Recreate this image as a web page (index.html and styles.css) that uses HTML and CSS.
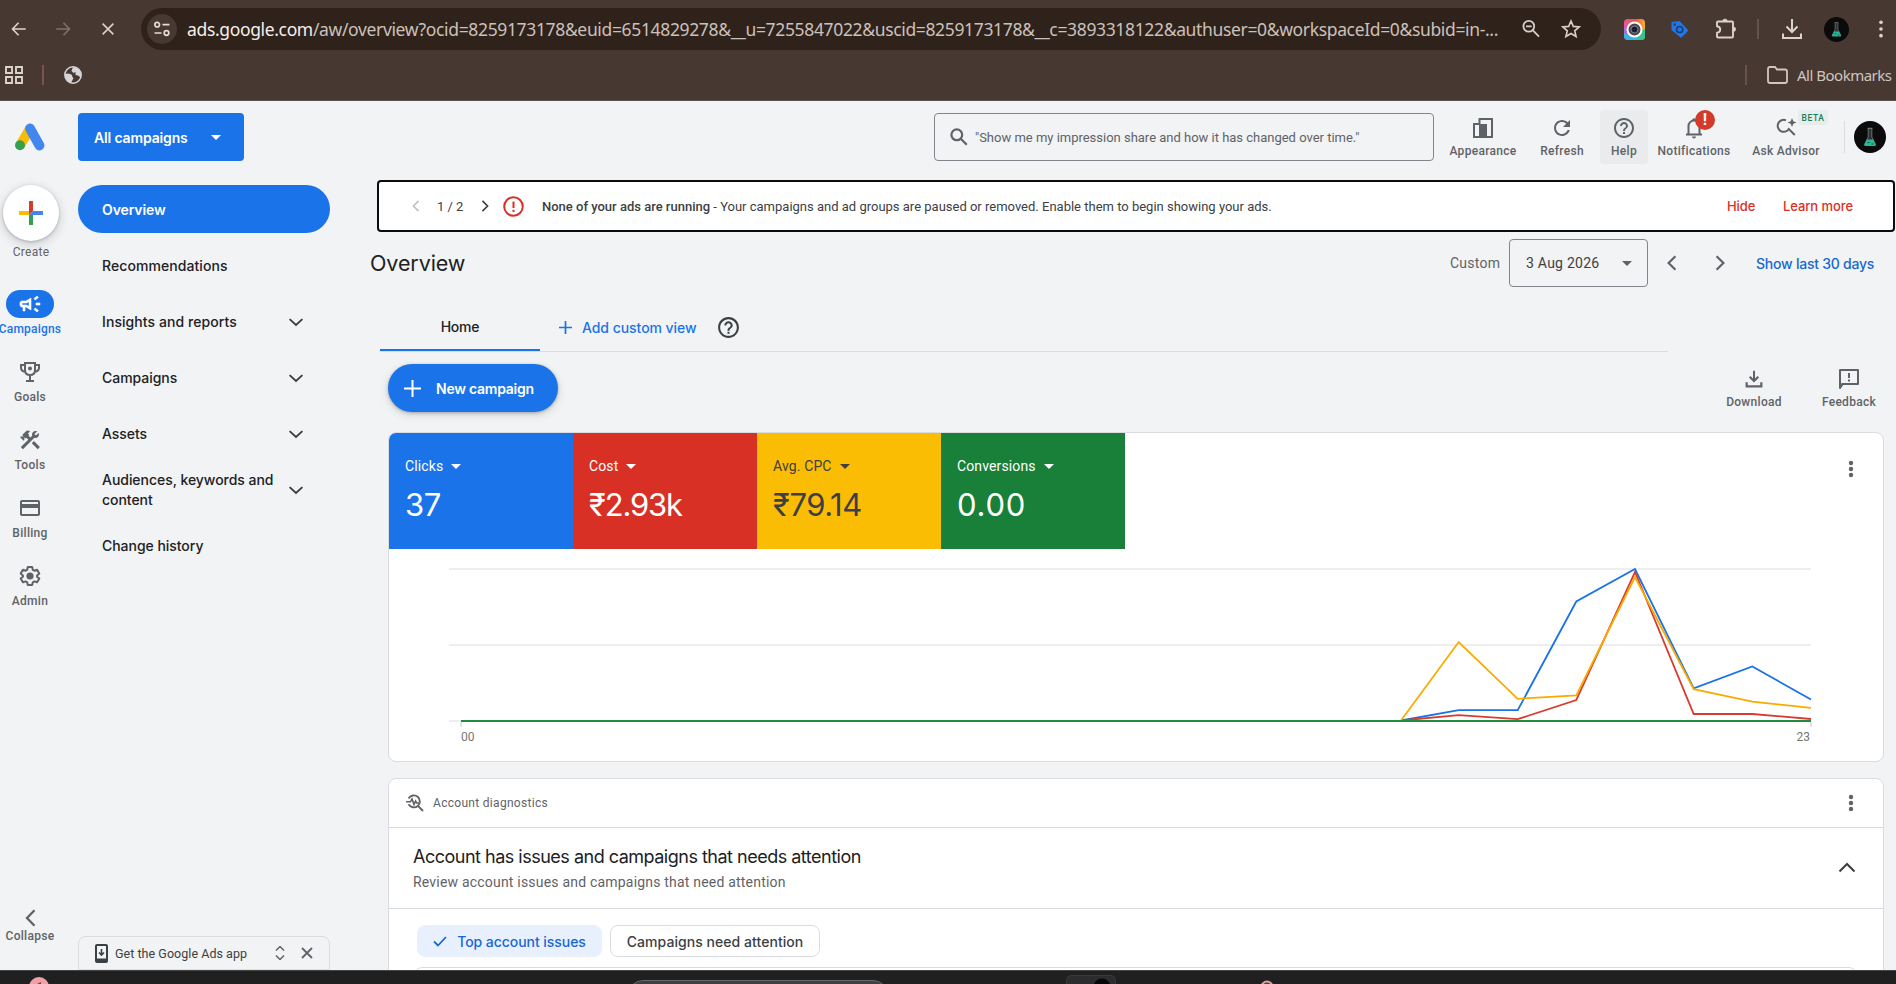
FILE: index.html
```html
<!DOCTYPE html>
<html lang="en">
<head>
<meta charset="utf-8">
<title>Overview - Google Ads</title>
<link rel="stylesheet" href="styles.css">
</head>
<body>
<svg class="defs" width="0" height="0">
  <symbol id="chev-l" viewBox="0 0 24 24"><path d="M15.4 5.2 8.6 12l6.8 6.8" fill="none" stroke="currentColor" stroke-width="2.2"/></symbol>
  <symbol id="chev-r" viewBox="0 0 24 24"><path d="M8.6 5.2 15.4 12l-6.8 6.8" fill="none" stroke="currentColor" stroke-width="2.2"/></symbol>
  <symbol id="chev-d" viewBox="0 0 24 24"><path d="M4.300 8.500 12 15.600l7.700-7.100" fill="none" stroke="currentColor" stroke-width="2.3"/></symbol>
  <symbol id="chev-u" viewBox="0 0 24 24"><path d="M4.5 15.5 12 8l7.5 7.500" fill="none" stroke="currentColor" stroke-width="2"/></symbol>
  <symbol id="help" viewBox="0 0 24 24"><path fill="currentColor" d="M11 18h2v-2h-2v2zm1-16C6.480 2 2 6.480 2 12s4.480 10 10 10 10-4.480 10-10S17.520 2 12 2zm0 18c-4.410 0-8-3.590-8-8s3.590-8 8-8 8 3.590 8 8-3.590 8-8 8zm0-14c-2.210 0-4 1.790-4 4h2c0-1.100.9-2 2-2s2 .9 2 2c0 2-3 1.750-3 5h2c0-2.250 3-2.500 3-5 0-2.210-1.790-4-4-4z"/></symbol>
  <symbol id="dots" viewBox="0 0 24 24"><circle cx="12" cy="6" r="2.200"/><circle cx="12" cy="12" r="2.200"/><circle cx="12" cy="18" r="2.200"/></symbol>
  <symbol id="download" viewBox="0 0 24 24"><path d="M12 3v11" fill="none" stroke="currentColor" stroke-width="2.200"/><path d="M7.300 9.500 12 14.200l4.700-4.700M4 15.500V20h16v-4.500" fill="none" stroke="currentColor" stroke-width="2.400"/></symbol>
  <symbol id="caret" viewBox="0 0 10 5"><path d="M0 0h10L5 5z" fill="currentColor"/></symbol>
  <symbol id="flask" viewBox="0 0 32 32"><circle cx="16" cy="16" r="16" fill="#0b0b0c"/><path d="M13.500 7.500h5" stroke="#777" stroke-width="1.500"/><path d="M14.200 8v8l-3.700 7.500h11L17.800 16V8" fill="#2b3134" stroke="#777" stroke-width=".9"/><path d="M12.800 18.500h6.400l2.600 5.500q0 1-1 1h-9.600q-1 0-1-1z" fill="#27b796"/><path d="M13.500 21.500h2m2 1.500h2" stroke="#0c5546" stroke-width="1.200"/></symbol>
</svg>

<header class="chrome">
  <div class="toolbar">
    <svg class="nav-i" viewBox="0 0 20 20"><path d="M17.500 10H3M9.500 3 2.800 10l6.700 7" fill="none" stroke="#dcd3cd" stroke-width="1.800"/></svg>
    <svg class="nav-i" viewBox="0 0 20 20"><path d="M2.500 10H17M10.500 3l6.700 7-6.700 7" fill="none" stroke="#7f706a" stroke-width="1.800"/></svg>
    <svg class="nav-i stop" viewBox="0 0 20 20"><path d="m4 4 12 12M16 4 4 16" fill="none" stroke="#dcd3cd" stroke-width="1.700"/></svg>
    <div class="omnibox">
      <span class="tune"><svg width="18" height="18" viewBox="0 0 18 18" fill="none" stroke="#e6deda" stroke-width="1.700"><circle cx="4.200" cy="4.700" r="2.300"/><path d="M9.500 4.700h7M1.500 13h7"/><circle cx="13.500" cy="13" r="2.300"/></svg></span>
      <span class="url"><b>ads.google.com</b>/aw/overview?ocid=8259173178&amp;euid=6514829278&amp;__u=7255847022&amp;uscid=8259173178&amp;__c=3893318122&amp;authuser=0&amp;workspaceId=0&amp;subid=in-...</span>
      <svg class="zoom-i" width="20" height="20" viewBox="0 0 20 20" fill="none" stroke="#d8cfc9" stroke-width="1.800"><circle cx="7.800" cy="7.300" r="5.400"/><path d="M5 7.300h5.600M11.700 11.200l6.300 6.500"/></svg>
      <svg width="20" height="20" viewBox="0 0 20 20" fill="none" stroke="#d8cfc9" stroke-width="1.600"><path d="m10 2 2.300 5.400 5.900.5-4.500 3.900 1.400 5.700-5.100-3-5.100 3 1.400-5.700L1.800 7.900l5.900-.5z"/></svg>
    </div>
    <svg class="cam" width="21" height="21" viewBox="0 0 21 21"><defs><linearGradient id="cg" x1="0" y1="0" x2="1" y2="0"><stop offset="0" stop-color="#e85a98"/><stop offset=".55" stop-color="#ef5148"/><stop offset="1" stop-color="#f6b12b"/></linearGradient></defs><rect width="21" height="21" rx="4" fill="url(#cg)"/><path d="M0 10.500h21V17q0 4-4 4H4q-4 0-4-4z" fill="#38b5e8"/><path d="M13 10.500h8V17q0 4-4 4h-4z" fill="#37c48c"/><path d="M0 8h8v10L0 14z" fill="#a96be0"/><circle cx="10.500" cy="10.500" r="7" fill="#4c474e" stroke="#fff" stroke-width="2"/><circle cx="10.500" cy="10.500" r="3.500" fill="#1b1b33" stroke="#84838c"/></svg>
    <svg class="tag" width="19" height="19" viewBox="0 0 19 19"><path d="M1.500 2 9.500 1l8 8.500q1 1 0 2L12 17q-1 1-2 0L1.500 10z" fill="#2376e5"/><circle cx="4.700" cy="4.500" r="1.300" fill="#473831"/><circle cx="9.700" cy="9.500" r="3.100" fill="none" stroke="#173a74" stroke-width="1.500"/></svg>
    <svg class="puz" width="22" height="22" viewBox="0 0 22 22" fill="none" stroke="#dcd3cd" stroke-width="1.900" stroke-linejoin="round"><path d="M2 4.500q0-1 1-1h14q1 0 1 1v14q0 1-1 1H3q-1 0-1-1v-3.700q3.200-.3 3.200-3.300T2 8.200z"/><path d="M7.800 3q0-2 2.200-2t2.200 2zM18.500 9q2.200 0 2.200 2.200t-2.200 2.200z" fill="#dcd3cd" stroke-width=".6"/></svg>
    <span class="vbar"></span>
    <svg class="dl" width="22" height="22" viewBox="0 0 22 22" fill="none" stroke="#dcd3cd" stroke-width="2"><path d="M11 1v12.500M5.500 8.500 11 14l5.500-5.500M2 15.500V20h18v-4.500"/></svg>
    <svg class="pf" width="25" height="25"><use href="#flask"/></svg>
    <svg class="kebab" width="24" height="20" viewBox="0 0 24 24" fill="#dcd3cd"><circle cx="12" cy="4" r="2.200"/><circle cx="12" cy="12" r="2.200"/><circle cx="12" cy="20" r="2.200"/></svg>
  </div>
  <div class="bookmarks">
    <svg width="18" height="18" viewBox="0 0 18 18" fill="none" stroke="#dcd3cd" stroke-width="1.900"><path d="M1 1h6v6H1zM11 1h6v6h-6zM1 11h6v6H1zM11 11h6v6h-6z"/></svg>
    <span class="vbar b1"></span>
    <svg class="globe" width="18" height="18" viewBox="0 0 18 18"><circle cx="9" cy="9" r="8.200" fill="#473831" stroke="#d5d6d9" stroke-width="1.500"/><path d="M1 8q4-1.500 7 1 0 2.500 1.500 3L7 17Q1 15 1 8zM9 1l-1.500 4 2 2 2-1v3l2.500.5q2 1 2.500 2.500Q19 3 9 1z" fill="#d5d6d9"/></svg>
    <span class="grow"></span>
    <span class="vbar"></span>
    <svg class="folder" width="21" height="18" viewBox="0 0 21 18" fill="none" stroke="#d0c7c1" stroke-width="1.800"><path d="M1 3q0-2 2-2h5l2 2.500h8q2 0 2 2V15q0 2-2 2H3q-2 0-2-2z"/></svg>
    <span class="allbm">All Bookmarks</span>
  </div>
</header>

<div class="app">
  <div class="appbar">
    <svg class="logo" width="32" height="28" viewBox="0 0 32 28"><path d="M16 5.500 6 22.500" stroke="#fbbc04" stroke-width="9.600" /><path d="M16 5.500 25.500 22.500" stroke="#4286ee" stroke-width="9.800" stroke-linecap="round"/><circle cx="6" cy="22.300" r="5" fill="#34a04f"/></svg>
    <button class="picker"><span>All campaigns</span><svg width="10" height="5"><use href="#caret"/></svg></button>
    <div class="search"><svg width="18" height="18" viewBox="0 0 18 18" fill="none" stroke="#5f6368" stroke-width="2.200"><circle cx="6.800" cy="6.800" r="5.400"/><path d="m10.800 10.800 6 6"/></svg><span>"Show me my impression share and how it has changed over time."</span></div>
    <div class="tool t-app"><svg width="24" height="24" viewBox="0 0 24 24" fill="none" stroke="#5f6368" stroke-width="2"><path d="M8.500 7V3H21v18H3V8h5.500z"/><path d="M9 9h6v12H9z" fill="#5f6368"/></svg><span>Appearance</span></div>
    <div class="tool t-ref"><svg width="24" height="24" viewBox="0 0 24 24" fill="#5f6368"><path d="M17.650 6.350C16.200 4.900 14.210 4 12 4c-4.420 0-7.990 3.580-7.990 8s3.570 8 7.990 8c3.730 0 6.840-2.550 7.730-6h-2.080c-.820 2.330-3.040 4-5.650 4-3.310 0-6-2.690-6-6s2.690-6 6-6c1.660 0 3.140.690 4.220 1.780L13 11h7V4l-2.350 2.350z"/></svg><span>Refresh</span></div>
    <div class="tool t-help"><svg width="24" height="24"><use href="#help"/></svg><span>Help</span></div>
    <div class="tool t-not"><svg width="24" height="24" viewBox="0 0 24 24"><path d="M4 18.500h16M6.500 18v-8a5.500 5.500 0 0 1 11 0v8" fill="none" stroke="#5f6368" stroke-width="2"/><path d="M10 20.500h4q0 2-2 2t-2-2zM10.500 5V3q1.500-1.500 3 0v2z" fill="#5f6368"/></svg><span>Notifications</span><i class="alert-dot">!</i></div>
    <div class="tool t-ask"><svg width="24" height="24" viewBox="0 0 24 24"><path d="M12 4.300A6 6 0 1 0 14.800 13l6 6" fill="none" stroke="#5f6368" stroke-width="2"/><path d="m18 2 1.300 3.200L22.500 6.500l-3.200 1.300L18 11l-1.300-3.200-3.200-1.300 3.200-1.300z" fill="#5f6368"/></svg><span>Ask Advisor</span><i class="beta">BETA</i></div>
    <span class="sep"></span>
    <svg class="avatar" width="32" height="32"><use href="#flask"/></svg>
  </div>

  <div class="body">
    <aside class="rail">
      <div class="create"><svg width="24" height="24" viewBox="0 0 24 24"><path d="M10 0h4v10l-4 4z" fill="#d33b2c"/><path d="M0 10h10v4H0z" fill="#fbbc04"/><path d="M10 14h4v10h-4z" fill="#34a04f"/><path d="M24 10v4H10l4-4z" fill="#4286ee"/></svg></div>
      <span class="lbl create-l">Create</span>
      <div class="pill"><svg width="24" height="24" viewBox="0 0 24 24" fill="#fff"><path d="M18 11v2h4v-2h-4zM16 17.610c.960.710 2.210 1.650 3.200 2.390.4-.530.8-1.070 1.200-1.600-.990-.740-2.240-1.680-3.200-2.400-.4.540-.8 1.080-1.200 1.610zM20.400 5.600c-.4-.530-.8-1.070-1.200-1.600-.990.740-2.240 1.680-3.200 2.400.4.530.8 1.070 1.200 1.600.960-.720 2.210-1.650 3.200-2.400zM4 9c-1.100 0-2 .9-2 2v2c0 1.100.9 2 2 2h1v4h2v-4h1l5 3V6L8 9H4zm5.030 1.710L11 9.530v4.940l-1.970-1.180-.48-.29H4v-2h4.550l.48-.29z" stroke="#fff" stroke-width=".6"/></svg></div>
      <span class="lbl on">Campaigns</span>
      <svg class="ri" viewBox="0 0 24 24"><path d="M7 3h10v7q0 5-5 5t-5-5zM7 5H3v3q0 3 4.500 4M17 5h4v3q0 3-4.500 4M12 15v6M8 21h8" fill="none" stroke="#5f6368" stroke-width="2"/><circle cx="12" cy="8.500" r="2" fill="#5f6368"/></svg>
      <span class="lbl">Goals</span>
      <svg class="ri" viewBox="0 0 24 24" fill="#5f6368"><path d="m13.783 15.172 2.121-2.121 5.996 5.996-2.121 2.121zM17.500 10c1.930 0 3.500-1.570 3.500-3.500 0-.580-.160-1.120-.410-1.600l-2.700 2.700-1.490-1.490 2.700-2.700c-.480-.250-1.020-.410-1.600-.410C15.570 3 14 4.570 14 6.500c0 .410.080.8.210 1.160l-1.850 1.850-1.780-1.780.710-.710-1.410-1.410L12 3.490c-1.170-1.170-3.070-1.170-4.240 0L4.220 7.030l1.410 1.410H2.810l-.710.710 3.540 3.540.710-.710V9.150l1.410 1.410.710-.710 1.780 1.780-7.410 7.410 2.120 2.120L16.340 9.790c.360.130.750.210 1.160.210z"/></svg>
      <span class="lbl">Tools</span>
      <svg class="ri" viewBox="0 0 24 24" fill="#5f6368"><path d="M20 4H4c-1.110 0-1.990.890-1.990 2L2 18c0 1.110.890 2 2 2h16c1.110 0 2-.890 2-2V6c0-1.110-.890-2-2-2zm0 14H4v-6h16v6zm0-10H4V6h16v2z"/></svg>
      <span class="lbl">Billing</span>
      <svg class="ri" viewBox="0 0 24 24"><path d="M9.800 3h4.400l.6 2.800 1.500.9 2.800-.9 2.200 3.700-2.200 1.900v1.300l2.200 1.900-2.200 3.700-2.800-.9-1.500.9-.6 2.700H9.800l-.6-2.700-1.500-.9-2.800.9-2.200-3.700 2.200-1.900v-1.300L2.700 9.500l2.200-3.700 2.800.9 1.500-.9z" fill="none" stroke="#5f6368" stroke-width="2" stroke-linejoin="round"/><circle cx="12" cy="12" r="3.600" fill="#5f6368"/></svg>
      <span class="lbl">Admin</span>
      <span class="grow"></span>
      <svg class="ri col" viewBox="0 0 24 24"><path d="M16.500 4.300 9 12l7.500 7.700" fill="none" stroke="#5f6368" stroke-width="2.300"/></svg>
      <span class="lbl col-l">Collapse</span>
    </aside>

    <nav class="menu">
      <a class="mi cur"><span>Overview</span></a>
      <a class="mi"><span class="w-rec">Recommendations</span></a>
      <a class="mi"><span class="w-rec">Insights and reports</span><svg width="20" height="20"><use href="#chev-d"/></svg></a>
      <a class="mi"><span>Campaigns</span><svg width="20" height="20"><use href="#chev-d"/></svg></a>
      <a class="mi"><span>Assets</span><svg width="20" height="20"><use href="#chev-d"/></svg></a>
      <a class="mi"><span>Audiences, keywords and<br>content</span><svg width="20" height="20"><use href="#chev-d"/></svg></a>
      <a class="mi"><span>Change history</span></a>
      <span class="grow"></span>
      <div class="promo">
        <svg width="13" height="19" viewBox="0 0 13 19"><rect x="1" y="1" width="11" height="17" rx="1" fill="none" stroke="#3c4043" stroke-width="2"/><path d="M1 14.500h11V18H1z" fill="#3c4043"/><path d="M6.500 5v6M4 8.500l2.500 2.500L9 8.500" stroke="#3c4043" stroke-width="1.600" fill="none"/></svg>
        <span>Get the Google Ads app</span>
        <svg class="ud" width="10" height="14" viewBox="0 0 10 14" fill="none" stroke="#5f6368" stroke-width="1.500"><path d="m1 4.500 4-4 4 4M1 9.500l4 4 4-4"/></svg>
        <svg width="12" height="12" viewBox="0 0 12 12" stroke="#5f6368" stroke-width="1.800"><path d="m1 1 10 10M11 1 1 11"/></svg>
      </div>
    </nav>

    <main class="main">
      <div class="banner">
        <svg class="pv" width="18" height="18"><use href="#chev-l"/></svg>
        <span class="pg">1 / 2</span>
        <svg class="nx" width="18" height="18"><use href="#chev-r"/></svg>
        <svg class="err" width="21" height="21" viewBox="0 0 21 21"><circle cx="10.500" cy="10.500" r="9.300" fill="none" stroke="#d93025" stroke-width="2"/><path d="M10.500 5.500v6.500M10.500 13.700v2.200" stroke="#d93025" stroke-width="2"/></svg>
        <span class="msg"><b>None of your ads are running</b> - Your campaigns and ad groups are paused or removed. Enable them to begin showing your ads.</span>
        <a class="hide">Hide</a><a class="learn">Learn more</a>
      </div>

      <div class="titlebar">
        <h1>Overview</h1>
        <span class="custom">Custom</span>
        <div class="date"><span>3 Aug 2026</span><svg width="10" height="5"><use href="#caret"/></svg></div>
        <svg class="p1" width="24" height="24"><use href="#chev-l"/></svg>
        <svg class="p2" width="24" height="24"><use href="#chev-r"/></svg>
        <a class="last30">Show last 30 days</a>
      </div>

      <div class="tabs">
        <span class="tab">Home</span>
        <a class="add"><svg width="13" height="13" viewBox="0 0 13 13" stroke="#1a73e8" stroke-width="1.700"><path d="M6.500 0v13M0 6.500h13"/></svg><span>Add custom view</span></a>
        <svg class="thelp" width="25" height="25"><use href="#help"/></svg>
      </div>

      <div class="actions">
        <button class="newc"><svg width="17" height="17" viewBox="0 0 17 17" stroke="#fff" stroke-width="2"><path d="M8.500 0v17M0 8.500h17"/></svg><span>New campaign</span></button>
        <div class="act a1"><svg width="22" height="22"><use href="#download"/></svg><span>Download</span></div>
        <div class="act a2"><svg width="24" height="24" viewBox="0 0 24 24"><path d="M3 21V3h18v14H5.500z" fill="none" stroke="#5f6368" stroke-width="2" stroke-linejoin="round"/><path d="M3 16v5l4-4zM11 6h2v5h-2zM11 12.500h2v2h-2z" fill="#5f6368"/></svg><span>Feedback</span></div>
      </div>

      <section class="card chart">
        <div class="tiles">
          <div class="tile blue"><span class="k">Clicks<svg width="10" height="5"><use href="#caret"/></svg></span><span class="v">37</span></div>
          <div class="tile red"><span class="k">Cost<svg width="10" height="5"><use href="#caret"/></svg></span><span class="v money">₹2.93k</span></div>
          <div class="tile yellow"><span class="k">Avg. CPC<svg width="10" height="5"><use href="#caret"/></svg></span><span class="v">₹79.14</span></div>
          <div class="tile green"><span class="k">Conversions<svg width="10" height="5"><use href="#caret"/></svg></span><span class="v wide">0.00</span></div>
          <svg class="more" width="24" height="24" fill="#5f6368"><use href="#dots"/></svg>
        </div>
        <svg class="plot" width="1493" height="180" viewBox="389 549 1493 180" fill="none" stroke-width="2">
          <path d="M449 569h1362M449 645h1362M449 721h1362" stroke="#eeeeee"/>
          <path d="M461 722v5M1811 722v5" stroke="#e4e4e4"/>
          <path d="M1401 720.500 1458.700 710.200H1517.700L1576.300 601.500 1635 569 1693.700 688.300 1752.300 666.500 1811 699.500" stroke="#1a73e8" stroke-width="1.800"/>
          <path d="M1401 720.500 1458.700 715.200 1517.700 719.200 1576.300 700 1635 572 1693.700 714H1752.300L1811 719" stroke="#d93b2f" stroke-width="1.800"/>
          <path d="M1401 720.500 1458.700 642 1517.700 698.800 1576.300 695.500 1635 577 1693.700 689.200 1752.300 701.700 1811 707.800" stroke="#f9ab00" stroke-width="1.800"/>
          <path d="M461 721H1811" stroke="#1e8e3e"/>
        </svg>
        <div class="axis"><span>00</span><span>23</span></div>
      </section>

      <section class="card diag">
        <div class="dh">
          <svg width="18" height="18" viewBox="0 0 18 18" fill="none" stroke="#5f6368" stroke-width="1.900"><path d="M2.600 4.500a6 6 0 1 1 0 5.800M11.700 11.700l5.300 5.300"/><path d="M0 7.800h4.500L6 5l2 5.500L9.500 7l1.200 2h2.300" stroke-width="1.600"/></svg>
          <span>Account diagnostics</span>
          <svg class="more2" width="24" height="24" fill="#5f6368"><use href="#dots"/></svg>
        </div>
        <div class="di">
          <div><h2>Account has issues and campaigns that needs attention</h2><p>Review account issues and campaigns that need attention</p></div>
          <svg width="24" height="24"><use href="#chev-u"/></svg>
        </div>
        <div class="chips">
          <span class="chip sel"><svg width="14" height="11" viewBox="0 0 14 11" fill="none" stroke="#1967d2" stroke-width="1.800"><path d="m1 5.500 4 4 8-8.500"/></svg><em>Top account issues</em></span>
          <span class="chip">Campaigns need attention</span>
        </div>
        <div class="inner"></div>
      </section>
    </main>
  </div>
</div>

<footer class="taskbar">
  <svg width="1896" height="13" viewBox="0 971 1896 13"><circle cx="39" cy="987" r="10" fill="#f0a0a6"/><path d="m37 984 4-2v2z" fill="#7a3d42"/><rect x="628" y="980.500" width="260" height="30" rx="15" fill="#3e3f41" stroke="#67686a"/><rect x="1066.500" y="975.500" width="49" height="30" rx="5" fill="#2c2c2e" stroke="#3a3a3c"/><circle cx="1102" cy="987" r="8.500" fill="#060606"/><circle cx="1267" cy="987" r="5.500" fill="#5a3b3b" stroke="#d9a3a0" stroke-width="2"/></svg>
</footer>
</body>
</html>
```
FILE: styles.css
```css
* { box-sizing: border-box; }
body { margin: 0; width: 1896px; height: 984px; overflow: hidden; background: #f1f3f4; color: #202124; font-family: Roboto, "Liberation Sans", sans-serif; display: flex; flex-direction: column; }
svg { display: block; flex: none; }
.defs { position: absolute; }
button { border: 0; padding: 0; font: inherit; color: inherit; }
.grow { flex: 1; }
span, a { white-space: nowrap; }

/* Browser frame */
.chrome { height: 101px; flex: none; background: #473831; border-bottom: 1px solid #55504e; }
.toolbar { height: 58px; display: flex; align-items: center; }
.nav-i { width: 18px; height: 18px; margin-left: 10px; margin-right: 16px; }
.nav-i.stop { margin-left: 10px; margin-right: 24px; }
.toolbar .nav-i:nth-child(2) { margin-left: 10px; margin-right: 17px; }
.omnibox { width: 1460px; height: 42px; border-radius: 21px; background: #2f221b; display: flex; align-items: center; padding-left: 6px; }
.tune { width: 30px; height: 30px; border-radius: 50%; background: #473831; display: grid; place-items: center; }
.url { font-family: "Noto Sans", sans-serif; font-size: 17.500px; color: #cbc0ba; margin-left: 10px; width: 1327px; letter-spacing: -0.350px; }
.url b { font-weight: 400; color: #f5eeea; }
.zoom-i { margin-left: 7px; margin-right: 20px; }
.cam { margin-left: 23px; }
.tag { margin-left: 25px; }
.puz { margin-left: 26px; }
.vbar { width: 2px; height: 20px; background: #66514b; }
.toolbar .vbar { margin-left: 20px; }
.dl { margin-left: 22px; }
.pf { margin-left: 21px; }
.kebab { margin-left: 20px; }
.bookmarks { height: 34px; display: flex; align-items: center; padding-left: 5px; }
.b1 { margin-left: 19px; background: #7a534d; }
.globe { margin-left: 20px; }
.folder { margin-left: 20px; }
.allbm { margin-left: 9px; width: 99px; font: 15px "Noto Sans", sans-serif; color: #cfc6c0; letter-spacing: -.5px; }

/* App bar */
.app { height: 869px; flex: none; overflow: hidden; display: flex; flex-direction: column; }
.appbar { height: 72px; flex: none; display: flex; align-items: center; padding-left: 14px; }
.picker { margin-left: 32px; width: 166px; height: 48px; border-radius: 4px; background: #1a73e8; color: #fff; display: flex; align-items: center; padding: 0 23px 0 16px; justify-content: space-between; font: 600 14px Inter, sans-serif; letter-spacing: -.15px; }
.search { margin-left: 690px; width: 500px; height: 48px; border: 1px solid #80868b; border-radius: 4px; display: flex; align-items: center; padding-left: 15px; gap: 7px; font-size: 13px; color: #5f6368; letter-spacing: -.01px; }
.tool { position: relative; height: 54px; display: flex; flex-direction: column; align-items: center; padding-top: 6px; color: #5f6368; font-size: 12px; font-weight: 500; letter-spacing: .3px; border-radius: 4px; line-height: 14px; gap: 4px; }
.t-app { width: 78px; margin-left: 10px; }
.t-ref { width: 52px; margin-left: 14px; }
.t-help { width: 48px; margin-left: 12px; background: #e9ebec; }
.t-not { width: 80px; margin-left: 6px; }
.t-ask { width: 80px; margin-left: 12px; }
.alert-dot { position: absolute; left: 41px; top: 0; width: 20px; height: 20px; border-radius: 50%; background: #d23a2c; color: #fff; font: 700 16px/20px Roboto, sans-serif; text-align: center; }
.beta { position: absolute; left: 52px; top: 0; width: 30px; height: 15px; background: #e7edec; border-radius: 3px; color: #188056; font: 500 8.500px/16px Roboto, sans-serif; text-align: center; letter-spacing: .6px; }
.sep { width: 1px; height: 32px; background: #dadce0; margin-left: 18px; }
.avatar { margin-left: 9px; }

.body { flex: 1; display: flex; min-height: 0; }

/* Icon rail */
.rail { width: 60px; flex: none; display: flex; flex-direction: column; align-items: center; padding-top: 12px; padding-bottom: 26px; }
.create { width: 56px; height: 56px; flex: none; border-radius: 50%; background: #fff; box-shadow: 0 1px 3px rgba(60,64,67,.3), 0 3px 8px 2px rgba(60,64,67,.15); display: grid; place-items: center; margin-left: 2px; }
.lbl { font-size: 12px; font-weight: 500; line-height: 16px; letter-spacing: .3px; color: #5f6368; }
.create-l { margin-top: 3px; font-weight: 400; margin-left: 2px; }
.pill { width: 48px; height: 28px; border-radius: 14px; background: #1a73e8; display: grid; place-items: center; margin-top: 30px; margin-bottom: 3px; }
.on { color: #1a73e8; letter-spacing: .2px; }
.ri { width: 24px; height: 24px; margin-top: 23px; margin-bottom: 5px; }
.ri.col { margin-bottom: -2px; }

/* Section menu */
.menu { width: 252px; margin-left: 18px; flex: none; display: flex; flex-direction: column; padding-top: 12px; font: 500 14px/20px Inter, sans-serif; }
.mi { height: 56px; flex: none; display: flex; align-items: center; justify-content: space-between; padding: 1px 24px 0; letter-spacing: -.04px; }
.w-rec { letter-spacing: .07px; }
.mi svg { color: #3c4043; }
.cur { height: 48px; border-radius: 24px; background: #1a73e8; color: #fff; margin-bottom: 4px; font-weight: 600; letter-spacing: -.1px; }
.promo { height: 34px; border: 1px solid #dadce0; border-radius: 8px 8px 0 0; display: flex; align-items: center; padding: 0 0 0 16px; font: 12.500px Roboto, sans-serif; color: #3c4043; letter-spacing: .04px; }
.promo span { width: 142px; margin-left: 7px; }
.promo .ud { margin-left: 18px; margin-right: 16px; }

/* Main column */
.main { width: 1526px; margin-left: 40px; flex: none; }
.banner { margin-left: 7px; margin-top: 7px; width: 1518px; height: 52px; border: 2px solid #0b0b0b; border-radius: 4px; background: #fff; display: flex; align-items: center; font-size: 13px; color: #3c4043; }
.banner b { font-weight: 500; }
.pv { color: #bdc1c6; margin-left: 28px; }
.pg { width: 27px; margin-left: 12px; }
.nx { margin-left: 12px; }
.err { margin-left: 9px; }
.msg { margin-left: 18px; width: 1185px; letter-spacing: 0; }
.banner a { color: #d93025; font: 500 13px Inter, sans-serif; letter-spacing: -.08px; }
.hide { width: 56px; }

.titlebar { height: 62px; display: flex; align-items: center; }
h1 { margin: 0; width: 1080px; font: 400 21.500px Inter, sans-serif; letter-spacing: -.1px; }
.custom { width: 59px; font-size: 14px; color: #5f6368; letter-spacing: .25px; }
.date { width: 139px; height: 48px; border: 1px solid #80868b; border-radius: 4px; display: flex; align-items: center; justify-content: space-between; padding: 0 15px 0 16px; font-size: 14px; color: #3c4043; letter-spacing: .25px; }
.date svg, .p1, .p2 { color: #5f6368; }
.p1 { margin-left: 12px; }
.p2 { margin-left: 24px; }
.last30 { margin-left: 24px; color: #1967d2; font: 500 14px Inter, sans-serif; letter-spacing: -.23px; }

.tabs { margin-left: 10px; width: 1288px; height: 58px; border-bottom: 1px solid #dadce0; display: flex; align-items: stretch; font: 500 14px Inter, sans-serif; }
.tab { width: 160px; height: 57px; border-bottom: 2px solid #1a73e8; display: flex; align-items: center; justify-content: center; padding-top: 10px; letter-spacing: -.2px; }
.add { display: flex; align-items: center; gap: 10px; color: #1a73e8; margin-left: 19px; padding-top: 9px; width: 137px; letter-spacing: -.05px; }
.thelp { align-self: center; margin-top: 9px; margin-left: 20px; color: #3c4043; }

.actions { height: 80px; display: flex; padding-left: 18px; padding-top: 12px; }
.newc { width: 170px; height: 48px; border-radius: 24px; background: #1a73e8; color: #fff; box-shadow: 0 1px 3px rgba(60,64,67,.35), 0 3px 8px rgba(60,64,67,.18); display: flex; align-items: center; gap: 15px; padding-left: 16px; font: 600 14px Inter, sans-serif; letter-spacing: -.25px; }
.act { display: flex; flex-direction: column; align-items: center; width: 60px; color: #5f6368; font-size: 12px; font-weight: 500; letter-spacing: .3px; line-height: 16px; }
.a1 { margin-left: 1166px; padding-top: 4px; gap: 4px; }
.a2 { margin-left: 35px; padding-top: 3px; gap: 3px; }

.card { margin-left: 18px; width: 1496px; background: #fff; border: 1px solid #dadce0; border-radius: 8px; overflow: hidden; }
.chart { height: 330px; }
.tiles { display: flex; height: 116px; }
.tile { width: 184px; padding: 23px 16px 0; color: #fff; display: flex; flex-direction: column; }
.k { display: flex; align-items: center; gap: 8px; font-size: 14px; line-height: 20px; letter-spacing: .13px; }
.v { margin-top: 10px; font: 400 31px/38px Inter, sans-serif; letter-spacing: -.4px; }
.money { letter-spacing: -1.150px; }
.wide { letter-spacing: .8px; }
.blue { background: #1a73e8; }
.red { background: #d93025; }
.yellow { background: #fbbc04; color: #3c4043; }
.green { background: #188038; }
.more { margin-left: 714px; margin-top: 24px; }
.axis { display: flex; justify-content: space-between; padding: 0 73px 0 72px; font-size: 12px; line-height: 16px; color: #757575; }

.diag { margin-top: 16px; height: 300px; border-radius: 8px 8px 0 0; }
.dh { height: 49px; border-bottom: 1px solid #dadce0; display: flex; align-items: center; padding-left: 17px; font-size: 12px; color: #5f6368; letter-spacing: .3px; }
.dh span { margin-left: 9px; width: 1406px; }
.di { height: 81px; border-bottom: 1px solid #dadce0; display: flex; align-items: center; justify-content: space-between; padding: 0 24px 0 24px; }
.di svg { color: #3c4043; }
h2 { margin: 0; font: 400 18px/26px Inter, sans-serif; letter-spacing: -.5px; }
p { margin: 2px 0 0; font-size: 14px; line-height: 20px; color: #5f6368; letter-spacing: .2px; }
.chips { display: flex; gap: 8px; padding: 16px 0 0 28px; }
.chip { height: 32px; border: 1px solid #dadce0; border-radius: 8px; width: 210px; display: flex; align-items: center; justify-content: center; color: #3c4043; font: 500 14px Inter, sans-serif; letter-spacing: .05px; }
.chip em { font-style: normal; }
.sel { width: 185px; background: #e8f0fe; border-color: #e8f0fe; color: #1967d2; gap: 10px; letter-spacing: -.05px; }
.inner { margin: 10px 26px 0 25px; height: 100px; border: 1px solid #dadce0; border-radius: 8px; }

.taskbar { height: 14px; flex: none; background: #202020; border-top: 1px solid #454545; }
```
